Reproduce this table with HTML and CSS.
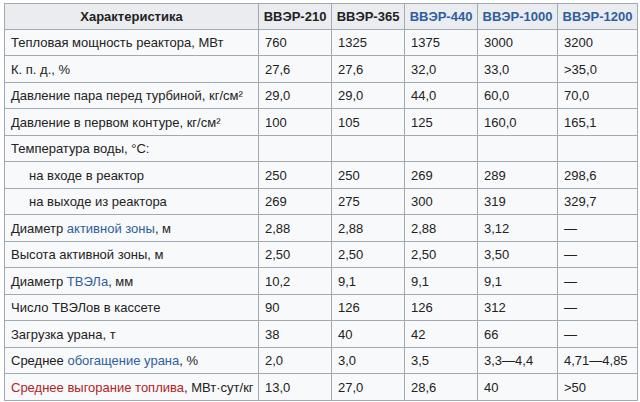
FILE: index.html
```html
<!DOCTYPE html>
<html lang="ru">
<head>
<meta charset="utf-8">
<link rel="stylesheet" href="styles.css">
</head>
<body>
<div class="page">
<table class="wikitable">
  <colgroup>
    <col class="c-name"><col class="c-s"><col class="c-s"><col class="c-s"><col class="c-l"><col class="c-l">
  </colgroup>
  <thead>
    <tr>
      <th>Характеристика</th>
      <th>ВВЭР-210</th>
      <th>ВВЭР-365</th>
      <th><a class="link">ВВЭР-440</a></th>
      <th><a class="link">ВВЭР-1000</a></th>
      <th><a class="link">ВВЭР-1200</a></th>
    </tr>
  </thead>
  <tbody>
    <tr><td>Тепловая мощность реактора, МВт</td><td>760</td><td>1325</td><td>1375</td><td>3000</td><td>3200</td></tr>
    <tr><td>К. п. д., %</td><td>27,6</td><td>27,6</td><td>32,0</td><td>33,0</td><td>&gt;35,0</td></tr>
    <tr><td>Давление пара перед турбиной, кг/см²</td><td>29,0</td><td>29,0</td><td>44,0</td><td>60,0</td><td>70,0</td></tr>
    <tr><td>Давление в первом контуре, кг/см²</td><td>100</td><td>105</td><td>125</td><td>160,0</td><td>165,1</td></tr>
    <tr><td>Температура воды, °C:</td><td></td><td></td><td></td><td></td><td></td></tr>
    <tr><td class="indent">на входе в реактор</td><td>250</td><td>250</td><td>269</td><td>289</td><td>298,6</td></tr>
    <tr><td class="indent">на выходе из реактора</td><td>269</td><td>275</td><td>300</td><td>319</td><td>329,7</td></tr>
    <tr><td>Диаметр <a class="link">активной зоны</a>, м</td><td>2,88</td><td>2,88</td><td>2,88</td><td>3,12</td><td>—</td></tr>
    <tr><td>Высота активной зоны, м</td><td>2,50</td><td>2,50</td><td>2,50</td><td>3,50</td><td>—</td></tr>
    <tr><td>Диаметр <a class="link">ТВЭЛа</a>, мм</td><td>10,2</td><td>9,1</td><td>9,1</td><td>9,1</td><td>—</td></tr>
    <tr><td>Число ТВЭЛов в кассете</td><td>90</td><td>126</td><td>126</td><td>312</td><td>—</td></tr>
    <tr><td>Загрузка урана, т</td><td>38</td><td>40</td><td>42</td><td>66</td><td>—</td></tr>
    <tr><td>Среднее <a class="link">обогащение урана</a>, %</td><td>2,0</td><td>3,0</td><td>3,5</td><td>3,3—4,4</td><td>4,71—4,85</td></tr>
    <tr><td><a class="redlink">Среднее выгорание топлива</a>, МВт·сут/кг</td><td>13,0</td><td>27,0</td><td>28,6</td><td>40</td><td>&gt;50</td></tr>
  </tbody>
</table>
</div>
</body>
</html>
```

FILE: styles.css
```css
html, body {
  margin: 0;
  padding: 0;
  background: #ffffff;
}
.page {
  padding: 3px 0 0 4px;
}
.wikitable {
  border-collapse: collapse;
  table-layout: fixed;
  width: 634px;
  background: #f8f9fa;
  color: #222222;
  font-family: "Liberation Sans", Arial, sans-serif;
  font-size: 13px;
  border: 1px solid #a2a9b1;
}
.c-name { width: 254px; }
.c-s { width: 73px; }
.c-l { width: 80px; }
.wikitable th,
.wikitable td {
  border: 1px solid #a2a9b1;
  padding: 0 6px;
  height: 25.5px;
  vertical-align: middle;
  white-space: nowrap;
  text-align: left;
}
.wikitable th {
  background: #eaecf0;
  font-weight: bold;
  text-align: center;
  height: 24.8px;
  padding: 0 4px;
}
.wikitable td.indent {
  padding-left: 24px;
}
.link {
  color: #2f5d9e;
  text-decoration: none;
}
.redlink {
  color: #b32424;
  text-decoration: none;
}
```
